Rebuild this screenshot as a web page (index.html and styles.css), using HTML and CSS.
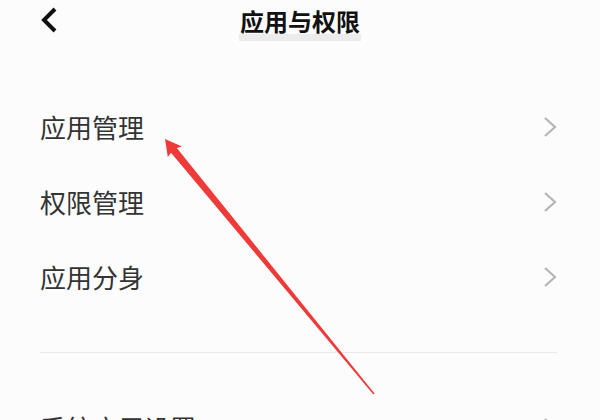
FILE: index.html
```html
<!DOCTYPE html>
<html lang="zh-CN">
<head>
<meta charset="utf-8">
<link rel="stylesheet" href="styles.css">
</head>
<body>
<div class="page">
  <header class="header">
    <div class="back">
      <svg width="18" height="26" viewBox="0 0 18 26"><polyline points="15,2 4,13 15,24" fill="none" stroke="#111" stroke-width="4" stroke-linejoin="miter"/></svg>
    </div>
    <div class="title">应用与权限</div>
    <div></div>
  </header>
  <div class="spacer"></div>
  <ul class="list">
    <li class="row"><span class="label">应用管理</span><svg class="chev" width="14" height="22" viewBox="0 0 14 22"><polyline points="2,2 12,11 2,20" fill="none" stroke="#b5b5b5" stroke-width="2.2"/></svg></li>
    <li class="row"><span class="label">权限管理</span><svg class="chev" width="14" height="22" viewBox="0 0 14 22"><polyline points="2,2 12,11 2,20" fill="none" stroke="#b5b5b5" stroke-width="2.2"/></svg></li>
    <li class="row"><span class="label">应用分身</span><svg class="chev" width="14" height="22" viewBox="0 0 14 22"><polyline points="2,2 12,11 2,20" fill="none" stroke="#b5b5b5" stroke-width="2.2"/></svg></li>
  </ul>
  <div class="divider"></div>
  <ul class="list second">
    <li class="row"><span class="label">系统应用设置</span><svg class="chev" width="14" height="22" viewBox="0 0 14 22"><polyline points="2,2 12,11 2,20" fill="none" stroke="#b5b5b5" stroke-width="2.2"/></svg></li>
  </ul>
  <svg class="arrow" width="600" height="420" viewBox="0 0 600 420">
    <polygon points="165,139 182,146.5 176.8,148 374.6,393.6 373.4,394.4 171,152.8 167.8,157" fill="#ef3a3a"/>
  </svg>
</div>
</body>
</html>
```
FILE: styles.css
```css
html, body {
  margin: 0;
  padding: 0;
  background: #fcfcfc;
  overflow: hidden;
}
.page {
  position: relative;
  width: 600px;
  height: 420px;
  overflow: hidden;
  font-family: "Noto Sans CJK SC", "Noto Sans", sans-serif;
}
.header {
  display: grid;
  grid-template-columns: 1fr auto 1fr;
  align-items: center;
  height: 42px;
  padding: 0 40px;
}
.back {
  display: flex;
  align-items: center;
  height: 42px;
  margin-top: -2px;
}
.title {
  font-size: 24px;
  font-weight: 700;
  color: #111;
  line-height: 40px;
  margin-top: -1px;
  background: linear-gradient(to bottom, transparent 82%, #ececec 82%);
  padding: 0 1px;
}
.spacer {
  height: 47px;
}
.list {
  list-style: none;
  margin: 0;
  padding: 0 43px 0 40px;
}
.row {
  display: flex;
  align-items: center;
  justify-content: space-between;
  height: 75px;
}
.label {
  font-size: 26px;
  color: #333;
  line-height: 1;
  letter-spacing: 0;
}
.chev {
  display: block;
}
.divider {
  margin: 38px 43px 0 40px;
  height: 1px;
  background: #e9e9e9;
}
.second {
  margin-top: 37px;
}
.arrow {
  position: absolute;
  left: 0;
  top: 0;
  pointer-events: none;
}
```
